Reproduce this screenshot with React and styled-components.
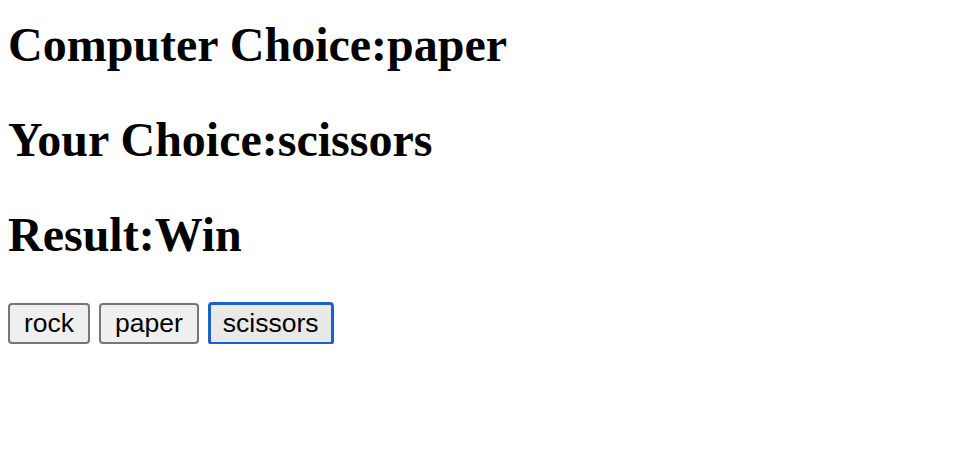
import React from "react"
import styled, { createGlobalStyle } from "styled-components"

const GlobalStyle = createGlobalStyle`
  body {
    margin: 8px;
    background: #ffffff;
    color: #000000;
    font-family: "Liberation Serif", "Times New Roman", serif;
  }
`

const Heading = styled.h2`
  font-size: 48px;
  font-weight: 700;
  margin: 0.83em 0;
  &:first-of-type {
    margin-top: 9px;
  }
`

const ButtonRow = styled.div`
  display: flex;
  gap: 9px;
  padding-top: 2px;
`

const ChoiceButton = styled.button`
  font-family: "Liberation Sans", Arial, sans-serif;
  font-size: 26.5px;
  line-height: 31px;
  padding: ${(p) => (p.$focused ? "3px 12px" : "3px 14px")};
  color: #000000;
  background: ${(p) => (p.$focused ? "#e9e9e9" : "#efefef")};
  border: ${(p) => (p.$focused ? "3px solid #1f5fcc" : "2px solid #767676")};
  margin: ${(p) => (p.$focused ? "-1px 0" : "0")};
  border-radius: 4px;
  cursor: pointer;
`

export default function App() {
  const choices = ["rock", "paper", "scissors"]
  return (
    <>
      <GlobalStyle />
      <Heading>Computer Choice:paper</Heading>
      <Heading>Your Choice:scissors</Heading>
      <Heading>Result:Win</Heading>
      <ButtonRow>
        {choices.map((c) => (
          <ChoiceButton key={c} $focused={c === "scissors"}>
            {c}
          </ChoiceButton>
        ))}
      </ButtonRow>
    </>
  )
}
